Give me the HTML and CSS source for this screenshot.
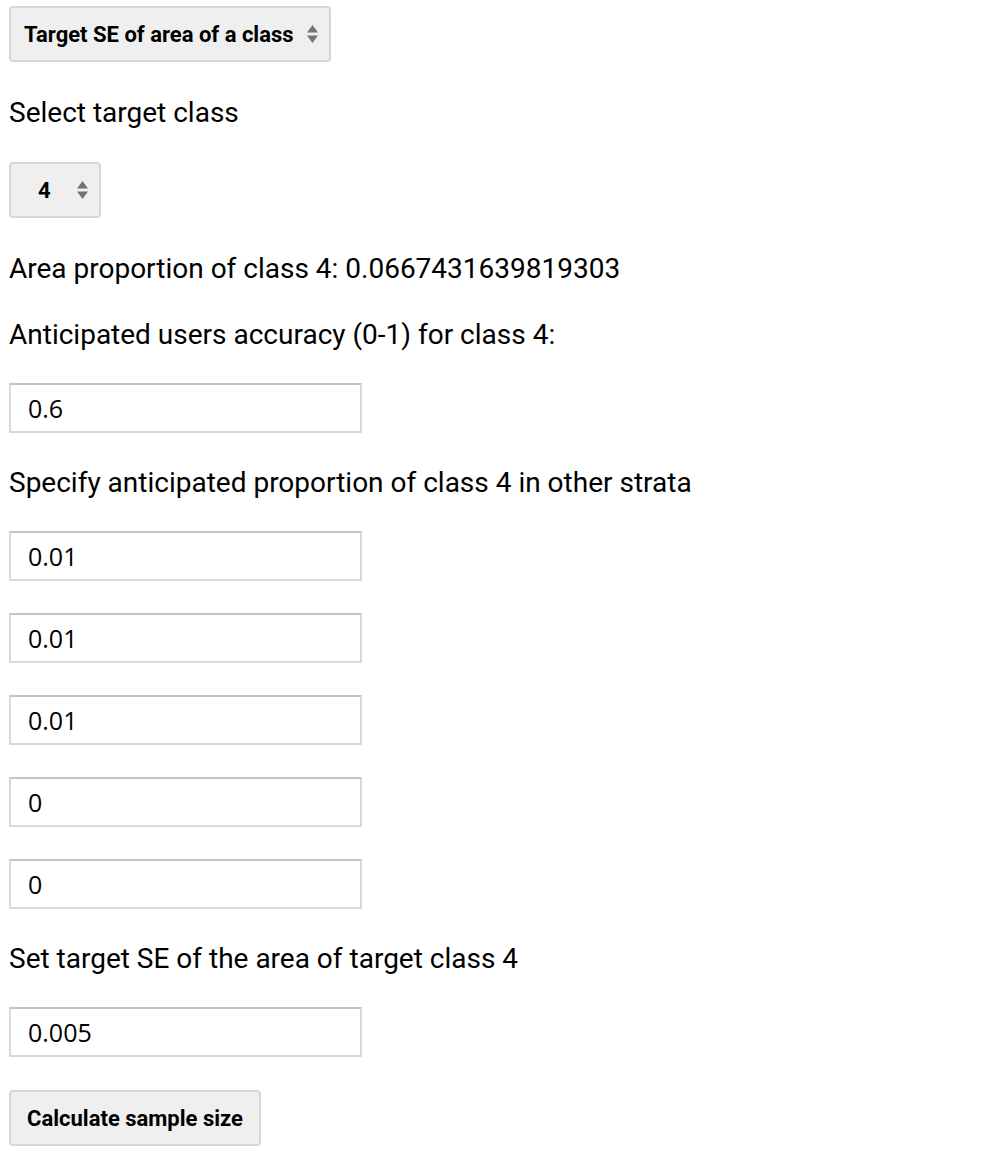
FILE: index.html
```html
<!DOCTYPE html>
<html>
<head>
<meta charset="utf-8">
<link rel="stylesheet" href="styles.css">
</head>
<body>
<div class="panel">
  <div class="select select-wide">
    <span class="select-text">Target SE of area of a class</span>
    <svg class="arrows" width="11" height="22" viewBox="0 0 11 22"><path d="M5.5 2 L11 9.5 L0 9.5 Z M0 12.5 L11 12.5 L5.5 20 Z" fill="#737373"/></svg>
  </div>
  <div class="label">Select target class</div>
  <div class="select select-narrow">
    <span class="select-text">4</span>
    <svg class="arrows" width="11" height="22" viewBox="0 0 11 22"><path d="M5.5 2 L11 9.5 L0 9.5 Z M0 12.5 L11 12.5 L5.5 20 Z" fill="#737373"/></svg>
  </div>
  <div class="label">Area proportion of class 4: 0.0667431639819303</div>
  <div class="label">Anticipated users accuracy (0-1) for class 4:</div>
  <input class="field" type="text" value="0.6">
  <div class="label">Specify anticipated proportion of class 4 in other strata</div>
  <input class="field" type="text" value="0.01">
  <input class="field" type="text" value="0.01">
  <input class="field" type="text" value="0.01">
  <input class="field" type="text" value="0">
  <input class="field" type="text" value="0">
  <div class="label">Set target SE of the area of target class 4</div>
  <input class="field" type="text" value="0.005">
  <button class="btn">Calculate sample size</button>
</div>
</body>
</html>
```
FILE: styles.css
```css
html, body {
  margin: 0;
  padding: 0;
  background: #ffffff;
}
.panel {
  display: flex;
  flex-direction: column;
  align-items: flex-start;
  gap: 34px;
  padding: 6px 9px;
  font-family: Roboto, "Liberation Sans", sans-serif;
  color: #000;
}
.label {
  font-size: 28px;
  line-height: 32px;
  height: 32px;
  margin-top: 1px;
  margin-bottom: -1px;
  white-space: nowrap;
}
.select {
  box-sizing: border-box;
  height: 56px;
  display: flex;
  align-items: center;
  background: #efefef;
  border: 2px solid #d6d6d6;
  border-radius: 4px;
  font-weight: bold;
  font-size: 22px;
}
.select-wide {
  width: 322px;
  padding: 0 0 0 13px;
}
.select-wide .arrows {
  margin-left: 13px;
}
.select-narrow {
  width: 92px;
  padding: 0 0 0 27px;
}
.select-narrow .arrows {
  margin-left: 26px;
}
.select-text {
  white-space: nowrap;
}
.field {
  box-sizing: border-box;
  width: 353px;
  height: 50px;
  margin: -1px 0;
  border: 2px solid #d9d9d9;
  border-top-color: #c4c4c4;
  padding: 0 0 0 17px;
  font-family: "Open Sans", "Noto Sans", sans-serif;
  font-size: 25px;
  color: #000;
  background: #fff;
  outline: none;
}
.btn {
  box-sizing: border-box;
  height: 56px;
  width: 252px;
  margin: 0;
  padding: 0;
  background: #efefef;
  border: 2px solid #d6d6d6;
  border-radius: 4px;
  font-family: Roboto, "Liberation Sans", sans-serif;
  font-weight: bold;
  font-size: 22px;
  color: #000;
}
```
